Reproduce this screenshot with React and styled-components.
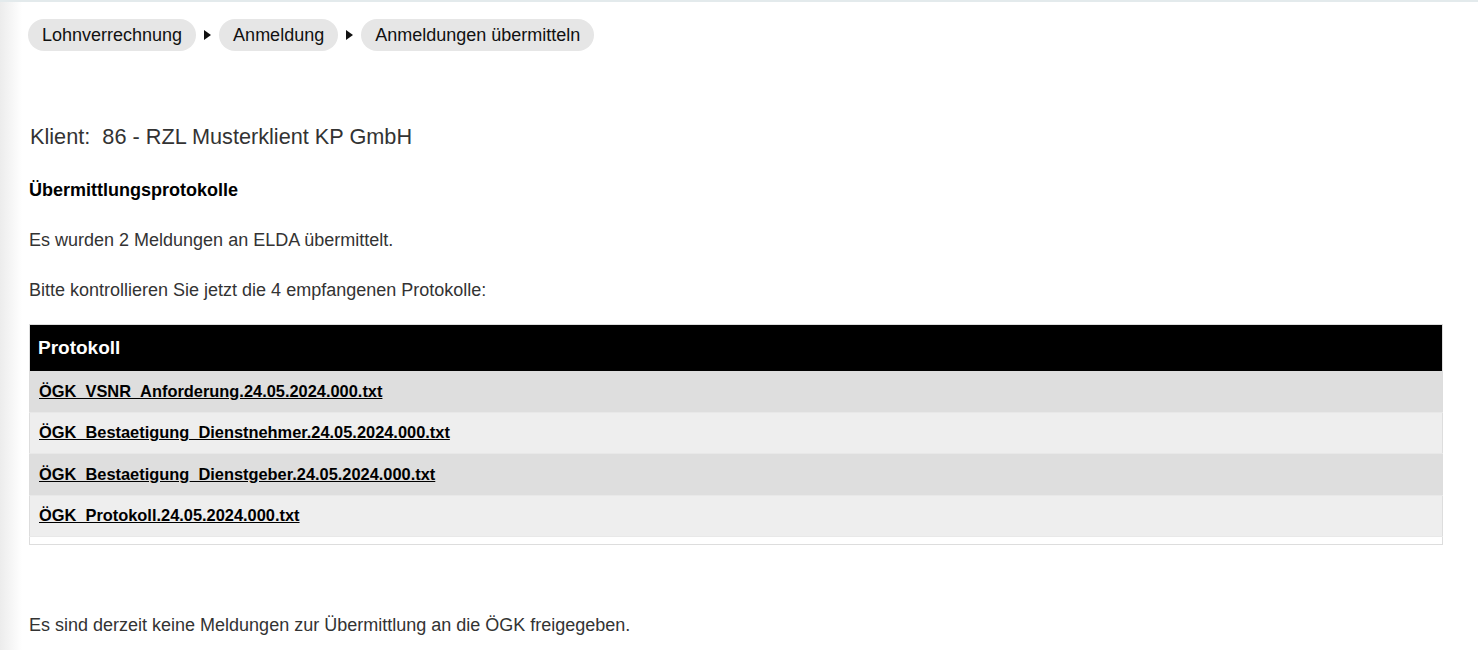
import React from 'react';
import styled, { createGlobalStyle } from 'styled-components';

const GlobalStyle = createGlobalStyle`
  html, body {
    margin: 0;
    padding: 0;
    background: #ffffff;
  }
  body {
    font-family: "Liberation Sans", Arial, sans-serif;
    color: #333333;
  }
`;

const crumbs = ['Lohnverrechnung', 'Anmeldung', 'Anmeldungen übermitteln'];

const files = [
  'ÖGK_VSNR_Anforderung.24.05.2024.000.txt',
  'ÖGK_Bestaetigung_Dienstnehmer.24.05.2024.000.txt',
  'ÖGK_Bestaetigung_Dienstgeber.24.05.2024.000.txt',
  'ÖGK_Protokoll.24.05.2024.000.txt',
];

export default function App() {
  return (
    <React.Fragment>
      <GlobalStyle />
      <Page>
        <Breadcrumbs>
          {crumbs.map((c, i) => (
            <React.Fragment key={c}>
              {i > 0 && <Arrow />}
              <Crumb>{c}</Crumb>
            </React.Fragment>
          ))}
        </Breadcrumbs>

        <Client>Klient:&nbsp; 86 - RZL Musterklient KP GmbH</Client>
        <Heading>Übermittlungsprotokolle</Heading>
        <Text>Es wurden 2 Meldungen an ELDA übermittelt.</Text>
        <Text>Bitte kontrollieren Sie jetzt die 4 empfangenen Protokolle:</Text>

        <Table>
          <thead>
            <tr>
              <Th>Protokoll</Th>
            </tr>
          </thead>
          <tbody>
            {files.map((f, i) => (
              <Row key={f} $odd={i % 2 === 0}>
                <Td>
                  <FileLink href="#">{f}</FileLink>
                </Td>
              </Row>
            ))}
            <tr>
              <Spacer />
            </tr>
          </tbody>
        </Table>

        <Footer>Es sind derzeit keine Meldungen zur Übermittlung an die ÖGK freigegeben.</Footer>
      </Page>
    </React.Fragment>
  );
}

const Page = styled.div`
  position: relative;
  min-height: 650px;
  box-sizing: border-box;
  padding: 19px 35px 0 29px;
  border-top: 2px solid #e3eaec;

  &::before {
    content: '';
    position: absolute;
    left: 0;
    top: 0;
    bottom: 0;
    width: 22px;
    background: linear-gradient(to right, #ececec, rgba(255, 255, 255, 0));
    pointer-events: none;
  }
`;

const Breadcrumbs = styled.div`
  display: flex;
  align-items: center;
  gap: 8px;
  margin-top: -2px;
  margin-left: -1px;
`;

const Crumb = styled.div`
  height: 32px;
  line-height: 32px;
  padding: 0 14px;
  border-radius: 16px;
  background: #e6e6e6;
  color: #111111;
  font-size: 18px;
`;

const Arrow = styled.span`
  width: 0;
  height: 0;
  border-top: 5px solid transparent;
  border-bottom: 5px solid transparent;
  border-left: 7px solid #111111;
`;

const Client = styled.div`
  margin-top: 73px;
  font-size: 21.7px;
  line-height: 26px;
  color: #333333;
  margin-left: 1px;
`;

const Heading = styled.div`
  margin-top: 29px;
  font-size: 18px;
  line-height: 22px;
  font-weight: bold;
  color: #000000;
`;

const Text = styled.p`
  margin: 28px 0 0;
  font-size: 18px;
  line-height: 22px;
  color: #333333;
`;

const Table = styled.table`
  margin-top: 23px;
  width: 100%;
  border-collapse: collapse;
  border: 1px solid #dddddd;
`;

const Th = styled.th`
  height: 46px;
  padding: 0 8px;
  background: #000000;
  color: #ffffff;
  font-size: 19px;
  font-weight: bold;
  text-align: left;
`;

const Row = styled.tr`
  background: ${p => (p.$odd ? '#dedede' : '#eeeeee')};
  border-bottom: 1px solid #e8e8e8;
`;

const Td = styled.td`
  height: 40.5px;
  padding: 0 9px;
  font-size: 16.4px;
`;

const FileLink = styled.a`
  color: #000000;
  font-weight: bold;
  text-decoration: underline;
`;

const Spacer = styled.td`
  height: 7px;
  padding: 0;
  background: #ffffff;
`;

const Footer = styled.p`
  margin: 69px 0 0;
  font-size: 18px;
  line-height: 22px;
  color: #333333;
`;
